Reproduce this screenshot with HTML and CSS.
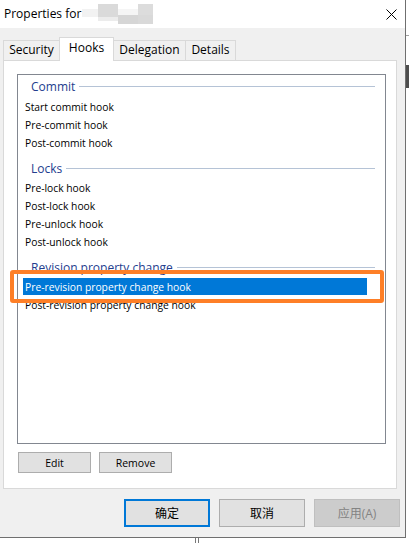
FILE: index.html
```html
<!DOCTYPE html>
<html lang="en">
<head>
<meta charset="utf-8">
<title>Properties</title>
<link rel="stylesheet" href="styles.css">
</head>
<body>
<div class="window">
  <div class="titlebar">
    <span class="title">Properties for</span>
    <svg class="blur" width="72" height="20" viewBox="0 0 72 20" aria-hidden="true">
      <rect x="0" y="5" width="16" height="8" fill="#f2f2f2"/>
      <rect x="16" y="0" width="20" height="13" fill="#dadada"/>
      <rect x="16" y="13" width="20" height="4" fill="#ececec"/>
      <rect x="36" y="5" width="20" height="6" fill="#f5f5f5"/>
      <rect x="36" y="11" width="20" height="9" fill="#d6d6d6"/>
      <rect x="56" y="0" width="15" height="11" fill="#dcdcdc"/>
      <rect x="56" y="11" width="15" height="9" fill="#d9d9d9"/>
    </svg>
    <svg class="close" width="11" height="11" viewBox="0 0 11 11" aria-hidden="true">
      <path d="M0.5 0.5 L10.5 10.5 M10.5 0.5 L0.5 10.5" stroke="#000" stroke-width="1" fill="none"/>
    </svg>
  </div>
  <div class="body">
    <div class="tabs">
      <div class="tab t-sec">Security</div>
      <div class="tab tab-active t-hooks">Hooks</div>
      <div class="tab t-del">Delegation</div>
      <div class="tab t-det">Details</div>
    </div>
    <div class="panel">
      <div class="listbox">
        <div class="group-header first"><span>Commit</span><i class="rule"></i></div>
        <div class="item">Start commit hook</div>
        <div class="item">Pre-commit hook</div>
        <div class="item">Post-commit hook</div>
        <div class="group-header"><span>Locks</span><i class="rule"></i></div>
        <div class="item">Pre-lock hook</div>
        <div class="item">Post-lock hook</div>
        <div class="item">Pre-unlock hook</div>
        <div class="item">Post-unlock hook</div>
        <div class="group-header"><span>Revision property change</span><i class="rule"></i></div>
        <div class="item selected">Pre-revision property change hook</div>
        <div class="item">Post-revision property change hook</div>
      </div>
      <div class="actions">
        <button class="btn-small">Edit</button>
        <button class="btn-small">Remove</button>
      </div>
    </div>
    <div class="footer">
      <button class="btn btn-default">确定</button>
      <button class="btn">取消</button>
      <button class="btn btn-disabled">应用(A)</button>
    </div>
  </div>
  <div class="annotation"></div>
</div>
<div class="desk mark-a"></div>
<div class="desk mark-b"></div>
<div class="desk mark-c"></div>
</body>
</html>
```
FILE: styles.css
```css
* {
  box-sizing: border-box;
  margin: 0;
  padding: 0;
}

html, body {
  background: #ffffff;
}

body {
  position: relative;
  width: 409px;
  height: 543px;
  overflow: hidden;
  font-family: "Open Sans", "Noto Sans", "Noto Sans CJK SC", sans-serif;
  color: #000;
}

.window {
  position: relative;
  width: 406px;
  height: 538px;
  border-right: 1px solid #6f6f6f;
  border-bottom: 1px solid #6f6f6f;
  background: #f0f0f0;
  display: flex;
  flex-direction: column;
}

.titlebar {
  flex: none;
  height: 28px;
  background: #fff;
  display: flex;
  align-items: center;
  padding-left: 4px;
}

.title {
  font-size: 12px;
  line-height: 16px;
}

.blur {
  display: block;
  margin-left: 1px;
}

.close {
  display: block;
  margin-left: auto;
  margin-right: 8px;
}

.body {
  flex: 1;
  display: flex;
  flex-direction: column;
  padding: 9px 0 0 3px;
}

.tabs {
  display: flex;
  align-items: flex-end;
  height: 23px;
}

.tab {
  height: 20px;
  border: 1px solid #d9d9d9;
  border-bottom: 0;
  background: #f0f0f0;
  font-size: 12px;
  display: flex;
  align-items: center;
  justify-content: center;
  padding-bottom: 2px;
  margin-left: -1px;
  white-space: nowrap;
}

.tab:first-child {
  margin-left: 0;
}

.tab-active {
  position: relative;
  z-index: 1;
  height: 24px;
  margin-bottom: -1px;
  background: #fff;
  padding-bottom: 5px;
}

.t-sec { width: 57px; }
.t-hooks { width: 55px; }
.t-del { width: 73px; }
.t-det { width: 51px; }

.panel {
  flex: none;
  width: 394px;
  height: 429px;
  border: 1px solid #d9d9d9;
  background: #fff;
  padding: 13px 0 0 13px;
}

.listbox {
  width: 369px;
  height: 370px;
  border: 1px solid #828790;
  background: #fff;
}

.group-header {
  height: 22px;
  margin-top: 5px;
  display: flex;
  align-items: center;
  padding-left: 13px;
  padding-right: 10px;
  color: #233d8e;
  font-size: 12px;
  white-space: nowrap;
}

.group-header.first {
  margin-top: 0;
}

.group-header.first + .item {
  margin-top: 1px;
}

.rule {
  flex: 1;
  height: 1px;
  margin-left: 4px;
  background: #b5c3d6;
}

.item {
  width: 344px;
  height: 18px;
  line-height: 18px;
  margin-left: 5px;
  padding-left: 2px;
  font-size: 10.3px;
  white-space: nowrap;
}

.item.selected {
  height: 17px;
  margin-bottom: 1px;
  background: #0078d7;
  color: #fff;
}

.actions {
  display: flex;
  gap: 8px;
  margin: 8px 0 0 1px;
}

.btn-small {
  width: 73px;
  height: 21px;
  background: #e1e1e1;
  border: 1px solid #adadad;
  font-family: inherit;
  font-size: 10.5px;
  color: #000;
}

.footer {
  display: flex;
  justify-content: flex-end;
  gap: 9px;
  margin-top: 10px;
  padding-right: 5px;
}

.btn {
  width: 86px;
  height: 28px;
  background: #e1e1e1;
  border: 1px solid #adadad;
  font-family: "Open Sans", "Noto Sans CJK SC", sans-serif;
  font-size: 12px;
  color: #000;
}

.btn-default {
  border: 2px solid #0078d7;
}

.btn-disabled {
  background: #cccccc;
  border-color: #bfbfbf;
  color: #838383;
}

.annotation {
  position: absolute;
  left: 10px;
  top: 270px;
  width: 374px;
  height: 33px;
  border: 4px solid #fe7f27;
  border-radius: 3px;
}

.desk {
  position: absolute;
}

.mark-a {
  left: 406px;
  top: 35px;
  width: 3px;
  height: 1px;
  background: #a0a0a0;
}

.mark-b {
  left: 406px;
  top: 65px;
  width: 3px;
  height: 23px;
  background: #4d4d4d;
}

.mark-c {
  left: 195px;
  top: 538px;
  width: 4px;
  height: 5px;
  border-left: 1px solid #777;
  border-right: 1px solid #777;
}
```
